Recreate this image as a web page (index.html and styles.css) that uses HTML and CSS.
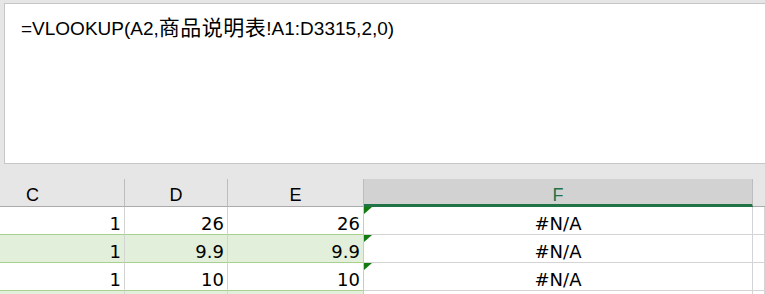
FILE: index.html
```html
<!DOCTYPE html>
<html lang="zh-CN">
<head>
  <meta charset="UTF-8" />
  <title>VLOOKUP</title>
  <link rel="stylesheet" href="styles.css">
</head>
<body>
  <!-- formula bar -->
  <div class="formula-bar">
    <span class="formula">=VLOOKUP(A2,<span class="cjk">商品说明表</span>!A1:D3315,2,0)</span>
  </div>

  <!-- grid -->
  <div class="sheet">
    <div class="row head">
      <div class="hc">C</div>
      <div class="hc">D</div>
      <div class="hc">E</div>
      <div class="hc sel">F</div>
      <div class="hc rest"></div>
    </div>

    <div class="row pre-hl">
      <div class="cell num">1</div>
      <div class="cell num">26</div>
      <div class="cell num last">26</div>
      <div class="cell err">#N/A</div>
      <div class="cell"></div>
    </div>

    <div class="row hl">
      <div class="cell num">1</div>
      <div class="cell num">9.9</div>
      <div class="cell num last">9.9</div>
      <div class="cell err">#N/A</div>
      <div class="cell"></div>
    </div>

    <div class="row pre-hl">
      <div class="cell num">1</div>
      <div class="cell num">10</div>
      <div class="cell num last">10</div>
      <div class="cell err">#N/A</div>
      <div class="cell"></div>
    </div>

    <div class="row hl">
      <div class="cell num"></div>
      <div class="cell num"></div>
      <div class="cell num last"></div>
      <div class="cell"></div>
      <div class="cell"></div>
    </div>
  </div>
</body>
</html>
```

FILE: styles.css
```css
html, body {
  margin: 0;
  padding: 0;
  height: 100%;
  overflow: hidden;
  background: #e6e6e6;
  font-family: "Liberation Sans", "Noto Sans CJK SC", sans-serif;
  color: #000;
}

.formula-bar {
  margin: 3px 0 0 4px;
  height: 161px;
  box-sizing: border-box;
  background: #fff;
  border: 1px solid #c6c6c6;
  border-right: none;
  padding: 10px 0 0 16px;
}

.formula {
  font-size: 19px;
  line-height: 24px;
}

.formula .cjk {
  font-family: "Noto Sans CJK SC", sans-serif;
  font-size: 21px;
  letter-spacing: 0.5px;
}

.sheet {
  margin-top: 15px;
  margin-left: -59px;
}

.row {
  display: grid;
  grid-template-columns: 184px 103px 136px 389px 1fr;
}

/* column headers */
.hc {
  height: 27px;
  line-height: 33px;
  text-align: center;
  font-size: 18px;
  border-right: 1px solid #bcbcbc;
  border-bottom: 1px solid #ababab;
}

.hc.sel {
  height: 25px;
  background: #d2d2d2;
  color: #217346;
  border-bottom: 3px solid #217346;
}

.hc.rest {
  border-right: none;
}

/* cells */
.cell {
  position: relative;
  height: 27px;
  line-height: 33px;
  font-family: "DejaVu Sans", sans-serif;
  font-size: 18px;
  background: #fff;
  border-right: 1px solid #d4d4d4;
  border-bottom: 1px solid #d4d4d4;
}

.num {
  text-align: right;
  padding-right: 3px;
}

.num.last {
  border-right-color: #b9d9a6;
}

.err {
  text-align: center;
}

.err::before {
  content: "";
  position: absolute;
  top: 0;
  left: 0;
  border-top: 7px solid #107c10;
  border-right: 8px solid transparent;
}

.pre-hl .num {
  border-bottom-color: #a9d08e;
}

.hl .num {
  background: #e2efda;
  border-bottom-color: #a9d08e;
}
```
